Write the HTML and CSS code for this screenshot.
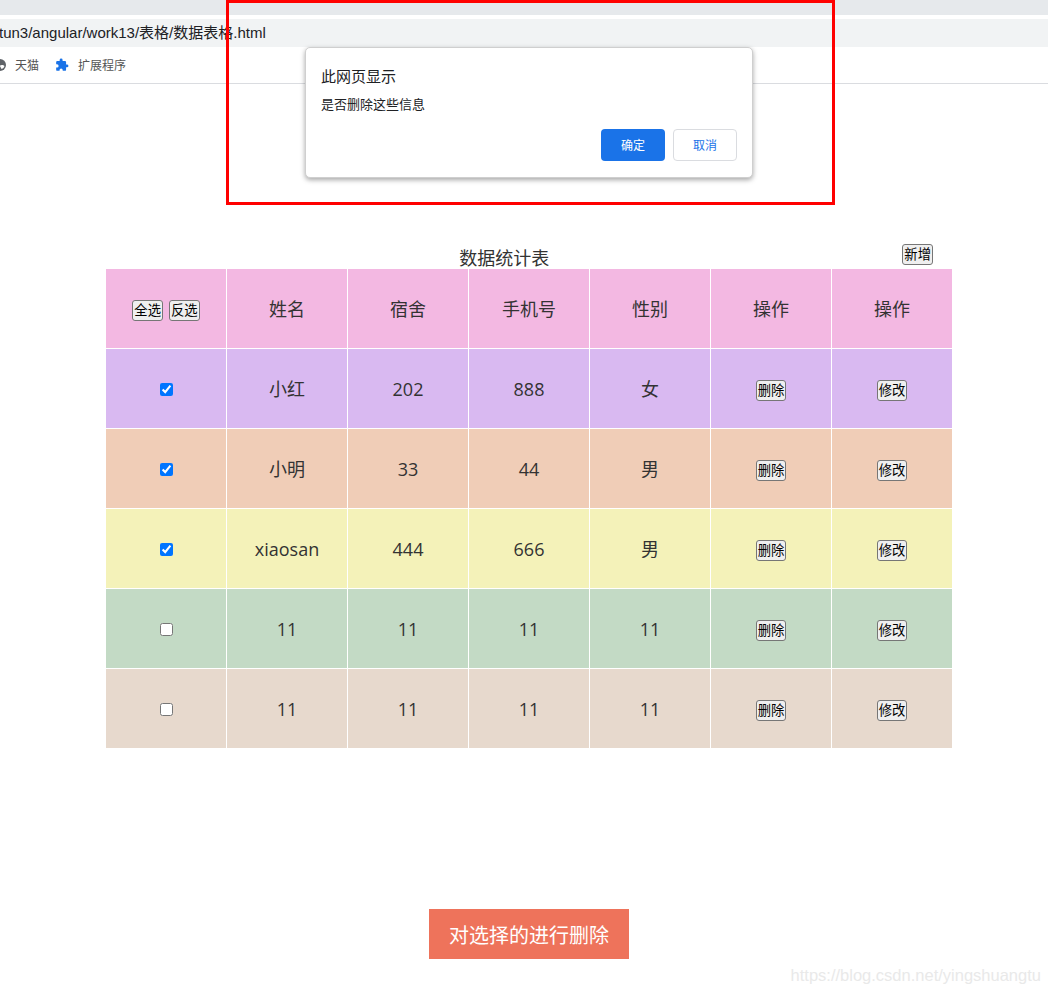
FILE: index.html
```html
<!DOCTYPE html>
<html lang="zh-CN">
<head>
    <meta charset="UTF-8">
    <title>数据表格</title>
    <link rel="stylesheet" href="styles.css">
</head>
<body>
<header class="chrome">
    <div class="tabs"></div>
    <div class="address">tun3/angular/work13/表格/数据表格.html</div>
    <div class="bookmarks">
        <span class="mark">
            <svg class="globe" width="12" height="12" viewBox="0 0 12 12"><circle cx="6" cy="6" r="6" fill="#5f6368"/><path d="M6 6.500c1.500-1 3.500-.5 4.500.5-.5 1.500-1.500 2.500-3 3-.5-1.500-1.500-2-1.500-3.500z" fill="#fff"/></svg>
            天猫
        </span>
        <span class="mark">
            <svg class="puzzle" width="14" height="14" viewBox="0 0 24 24"><path d="M20.5 11H19V7a2 2 0 0 0-2-2h-4V3.5a2.5 2.5 0 0 0-5 0V5H4a2 2 0 0 0-2 2v3.8h1.5a2.7 2.7 0 0 1 0 5.4H2V20a2 2 0 0 0 2 2h3.8v-1.5a2.7 2.7 0 0 1 5.4 0V22H17a2 2 0 0 0 2-2v-4h1.500a2.500 2.500 0 0 0 0-5z"/></svg>
            扩展程序
        </span>
    </div>
</header>

<main class="content">
    <div class="caption">
        <span class="caption-title">数据统计表</span>
        <button class="btn add">新增</button>
    </div>
    <div class="grid">
        <div class="row head">
            <div class="cell"><button class="btn">全选</button><button class="btn">反选</button></div>
            <div class="cell">姓名</div>
            <div class="cell">宿舍</div>
            <div class="cell">手机号</div>
            <div class="cell">性别</div>
            <div class="cell">操作</div>
            <div class="cell">操作</div>
        </div>
        <div class="row r1">
            <div class="cell"><input type="checkbox" checked></div>
            <div class="cell">小红</div>
            <div class="cell">202</div>
            <div class="cell">888</div>
            <div class="cell">女</div>
            <div class="cell"><button class="btn">删除</button></div>
            <div class="cell"><button class="btn">修改</button></div>
        </div>
        <div class="row r2">
            <div class="cell"><input type="checkbox" checked></div>
            <div class="cell">小明</div>
            <div class="cell">33</div>
            <div class="cell">44</div>
            <div class="cell">男</div>
            <div class="cell"><button class="btn">删除</button></div>
            <div class="cell"><button class="btn">修改</button></div>
        </div>
        <div class="row r3">
            <div class="cell"><input type="checkbox" checked></div>
            <div class="cell">xiaosan</div>
            <div class="cell">444</div>
            <div class="cell">666</div>
            <div class="cell">男</div>
            <div class="cell"><button class="btn">删除</button></div>
            <div class="cell"><button class="btn">修改</button></div>
        </div>
        <div class="row r4">
            <div class="cell"><input type="checkbox"></div>
            <div class="cell">11</div>
            <div class="cell">11</div>
            <div class="cell">11</div>
            <div class="cell">11</div>
            <div class="cell"><button class="btn">删除</button></div>
            <div class="cell"><button class="btn">修改</button></div>
        </div>
        <div class="row r5">
            <div class="cell"><input type="checkbox"></div>
            <div class="cell">11</div>
            <div class="cell">11</div>
            <div class="cell">11</div>
            <div class="cell">11</div>
            <div class="cell"><button class="btn">删除</button></div>
            <div class="cell"><button class="btn">修改</button></div>
        </div>
    </div>
    <div class="bulk">
        <button class="bulk-btn">对选择的进行删除</button>
    </div>
</main>

<div class="dialog">
    <div class="dialog-title">此网页显示</div>
    <div class="dialog-text">是否删除这些信息</div>
    <div class="dialog-actions">
        <button class="ok">确定</button>
        <button class="cancel">取消</button>
    </div>
</div>
<div class="frame"></div>
<div class="watermark">https://blog.csdn.net/yingshuangtu</div>
</body>
</html>
```

FILE: styles.css
```css
* {
    box-sizing: border-box;
}

html, body {
    height: 996px;
    overflow: hidden;
}

body {
    margin: 0;
    position: relative;
    background: #fff;
    color: #333;
    font-family: "Open Sans", "Noto Sans CJK SC", sans-serif;
}

.tabs {
    height: 15px;
    background: #e6e9ec;
}

.address {
    height: 28px;
    margin-top: 4px;
    margin-left: -1px;
    padding-left: 0;
    background: #f1f3f4;
    color: #202124;
    font-family: "Liberation Sans", "Noto Sans CJK SC", sans-serif;
    font-size: 15px;
    line-height: 28px;
    white-space: nowrap;
}

.bookmarks {
    height: 37px;
    display: flex;
    align-items: center;
    gap: 16px;
    border-bottom: 1px solid #dadce0;
    color: #555;
    font-size: 12px;
}

.mark {
    display: flex;
    align-items: center;
    gap: 9px;
}

.globe {
    margin-left: -6px;
}

.puzzle {
    fill: #1a73e8;
}

.content {
    width: 846px;
    margin-left: 106px;
}

.caption {
    height: 26px;
    margin-top: 159px;
    display: flex;
    align-items: flex-end;
    font-size: 18px;
}

.caption-title {
    flex: 1;
    text-align: center;
    line-height: 23px;
    margin-bottom: -1px;
}

.btn {
    height: 21px;
    padding: 0 1px;
    margin: 0 3px;
    border: 1px solid #767676;
    border-radius: 3px;
    background: #efefef;
    color: #000;
    font-family: "Liberation Sans", "Noto Sans CJK SC", sans-serif;
    font-size: 13.33px;
    line-height: 19px;
}

.add {
    margin: 0 19px 4px 0;
}

.row {
    display: grid;
    grid-template-columns: repeat(7, 120px);
    column-gap: 1px;
    height: 79px;
    margin-bottom: 1px;
    font-size: 18px;
}

.cell {
    display: flex;
    align-items: center;
    justify-content: center;
    line-height: 24px;
}

.cell .btn {
    margin-top: 3px;
}

.cell input {
    width: 13px;
    height: 13px;
    margin: 1px 0 0;
    accent-color: #0075ff;
}

.head .cell { background: #f3b8e2; }
.r1 .cell { background: #d9b9f1; }
.r2 .cell { background: #f0cdb7; }
.r3 .cell { background: #f4f2b9; }
.r4 .cell { background: #c3dac5; }
.r5 .cell { background: #e7d9cd; }

.bulk {
    margin-top: 161px;
    display: flex;
    justify-content: center;
}

.bulk-btn {
    width: 200px;
    height: 50px;
    padding: 0;
    border: 0;
    background: #ee735b;
    color: #fff;
    font-family: inherit;
    font-size: 20px;
}

.dialog {
    position: absolute;
    left: 305px;
    top: 47px;
    width: 448px;
    height: 131px;
    padding: 19px 15px 0;
    background: #fff;
    border: 1px solid #cfcfcf;
    border-radius: 5px;
    box-shadow: 0 2px 5px rgba(0, 0, 0, .35);
    color: #202124;
}

.dialog-title {
    font-size: 15px;
    line-height: 19px;
}

.dialog-text {
    margin-top: 9px;
    font-size: 13px;
    line-height: 18px;
}

.dialog-actions {
    margin-top: 16px;
    display: flex;
    justify-content: flex-end;
    gap: 8px;
}

.ok, .cancel {
    height: 32px;
    padding: 0;
    border-radius: 4px;
    font-family: inherit;
    font-size: 12px;
}

.ok {
    width: 64px;
    border: 0;
    background: #1a73e8;
    color: #fff;
}

.cancel {
    width: 64px;
    border: 1px solid #dadce0;
    background: #fff;
    color: #1a73e8;
}

.frame {
    position: absolute;
    left: 226px;
    top: 0;
    width: 609px;
    height: 205px;
    border: 3px solid #f00;
}

.watermark {
    position: absolute;
    right: 7px;
    top: 966px;
    color: #e9e9e9;
    font-family: "Liberation Sans", sans-serif;
    font-size: 16.500px;
}
```
